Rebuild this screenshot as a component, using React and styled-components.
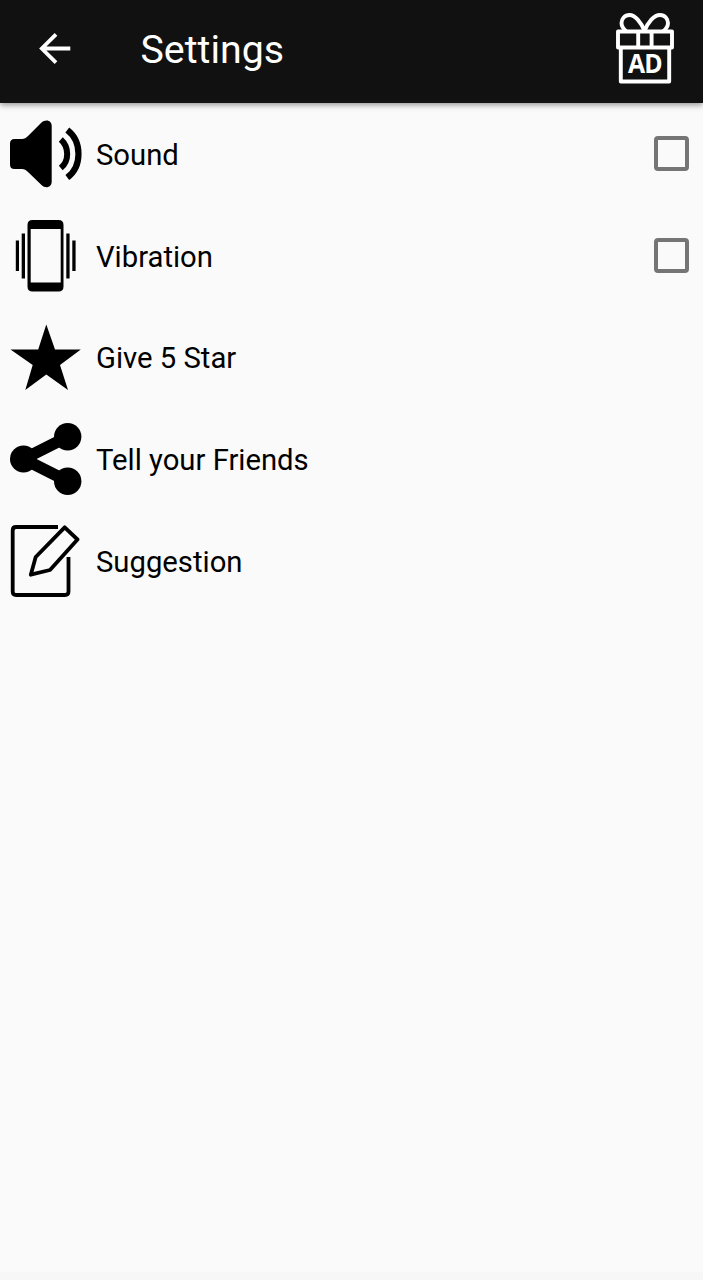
import React, { useState } from 'react';
import styled, { createGlobalStyle } from 'styled-components';

const GlobalStyle = createGlobalStyle`
  * {
    box-sizing: border-box;
  }
  body {
    margin: 0;
    background: #fafafa;
    font-family: Roboto, sans-serif;
  }
`

const Page = styled.div`
  display: flex;
  flex-direction: column;
  height: 1280px;
  background: #fafafa;
`

const Header = styled.header`
  display: flex;
  align-items: center;
  flex: none;
  height: 103px;
  padding: 0 28px 6px 37px;
  background: #111111;
  color: #ffffff;
  box-shadow: 0 2px 6px rgba(0, 0, 0, 0.42);
`

const IconButton = styled.button`
  display: flex;
  padding: 0;
  border: 0;
  background: none;
  color: inherit;

  svg {
    display: block;
  }
`

const Title = styled.h1`
  flex: 1;
  margin: 2px 0 0 67.5px;
  font-size: 39.3px;
  font-weight: 400;
  line-height: 46px;
`

const List = styled.main`
  flex: 1;
`

const Row = styled.div`
  display: flex;
  align-items: center;
  height: 101.7px;
  padding: 0 14px 0 10px;
`

const RowIcon = styled.svg`
  flex: none;
  width: 72px;
  height: 72px;
  color: #000000;
`

const Label = styled.span`
  flex: 1;
  margin: 2px 0 0 14px;
  color: #000000;
  font-size: 29.25px;
  line-height: 34px;
`

const Checkbox = styled.button`
  width: 35px;
  height: 35px;
  padding: 0;
  border: 4px solid #757575;
  border-radius: 4px;
  background: ${({ $checked }) => ($checked ? '#757575' : 'transparent')};
`

const BottomBar = styled.div`
  flex: none;
  height: 8px;
  background: #f7f7f7;
`

const BackArrow = () => (
  <svg width="36" height="36" viewBox="0 0 36 36" fill="none" stroke="currentColor" strokeWidth="3.8">
    <path d="M33.3 17.5H5M19 3.3L4.8 17.5L19 31.7" />
  </svg>
)

const GiftAd = () => (
  <svg width="60" height="74" viewBox="0 0 60 74" fill="none" stroke="currentColor" strokeWidth="3.9" strokeLinejoin="round">
    <path d="M3 19.5H57V35.5H3ZM5.8 35.5V69.5H54.2V35.5M23.2 19.5V35.5M36.6 19.5V35.5" />
    <path d="M29.5 19C26 10 20 3 14.5 3C9.5 3 6.5 7 6.5 11C6.5 15 9 17.5 11.5 19.5M29.5 19C33 10 39 3 45 3C50 3 53 7 53 11C53 15 50.5 17.5 48 19.5" />
    <text x="30" y="61.3" textAnchor="middle" fill="currentColor" stroke="none" fontFamily="Open Sans, sans-serif" fontWeight="700" fontSize="26" letterSpacing="-0.8" textLength="34" lengthAdjust="spacingAndGlyphs">AD</text>
  </svg>
)

const SoundIcon = () => (
  <RowIcon viewBox="0 0 72 72">
    <path fill="currentColor" d="M4.5 21H12C14.5 21 16 20 18 18L31 5C36 .5 41.7 2.5 41.7 8V63.5C41.7 69.5 35.5 71 31.5 67L18 54C16 52 14.5 51 12 51H4.5C1.5 51 0 49.5 0 46.5V25.5C0 22.5 1.5 21 4.5 21Z" />
    <path fill="none" stroke="currentColor" strokeWidth="6" d="M50.8 21.5C59.3 29 59.3 43 50.8 50" />
    <path fill="none" stroke="currentColor" strokeWidth="6.2" d="M57.3 12C72.2 23.5 72.2 48.5 57.3 59.5" />
  </RowIcon>
)

const VibrationIcon = () => (
  <RowIcon viewBox="0 0 72 72" fill="currentColor">
    <path fillRule="evenodd" d="M22.5 0H48.5Q53.5 0 53.5 5V66.5Q53.5 71.5 48.5 71.5H22.5Q17.5 71.5 17.5 66.5V5Q17.5 0 22.5 0ZM20.7 9V62.5H50.7V9Z" />
    <path d="M5.8 20.5H9V51H5.8ZM11.7 13.5H15V58.5H11.7ZM56.3 13.5H59.6V58.5H56.3ZM62.3 20.5H65.6V51H62.3Z" />
  </RowIcon>
)

const StarIcon = () => (
  <RowIcon viewBox="0 0 72 72" fill="currentColor">
    <path d="M36.3 3.5L45 28.5H70.8L50 44L58 69L36.3 53.5L15.3 69L22.7 44L.5 28.5H28.2Z" />
  </RowIcon>
)

const ShareIcon = () => (
  <RowIcon viewBox="0 0 72 72" fill="currentColor">
    <circle cx="13.5" cy="36" r="13.5" />
    <circle cx="57.7" cy="13.8" r="13.7" />
    <circle cx="57.7" cy="58.2" r="13.7" />
    <path fill="none" stroke="currentColor" strokeWidth="11.6" d="M57.7 13.8L13.5 36L57.7 58.2" />
  </RowIcon>
)

const SuggestionIcon = () => (
  <RowIcon viewBox="0 0 72 72" fill="none" stroke="currentColor" strokeWidth="3.8">
    <path d="M48 2H6Q2.7 2 2.7 5.5V66.5Q2.7 70 6 70H55Q58.5 70 58.5 66.5V32" />
    <path strokeLinejoin="round" d="M54.7 2.3L67.5 14.5L40 45L20.8 49.7L25.7 32Z" />
  </RowIcon>
)

const items = [
  { label: 'Sound', Icon: SoundIcon, checkable: true },
  { label: 'Vibration', Icon: VibrationIcon, checkable: true },
  { label: 'Give 5 Star', Icon: StarIcon },
  { label: 'Tell your Friends', Icon: ShareIcon },
  { label: 'Suggestion', Icon: SuggestionIcon },
]

const App = () => {
  const [checked, setChecked] = useState({})

  const toggle = (label) => setChecked({ ...checked, [label]: !checked[label] })

  return (
    <Page>
      <GlobalStyle />
      <Header>
        <IconButton aria-label="Back"><BackArrow /></IconButton>
        <Title>Settings</Title>
        <IconButton aria-label="Watch ad"><GiftAd /></IconButton>
      </Header>
      <List>
        {items.map(({ label, Icon, checkable }) => (
          <Row key={label}>
            <Icon />
            <Label>{label}</Label>
            {checkable && (
              <Checkbox
                role="checkbox"
                aria-label={label}
                aria-checked={!!checked[label]}
                $checked={checked[label]}
                onClick={() => toggle(label)}
              />
            )}
          </Row>
        ))}
      </List>
      <BottomBar />
    </Page>
  )
}

export default App;
